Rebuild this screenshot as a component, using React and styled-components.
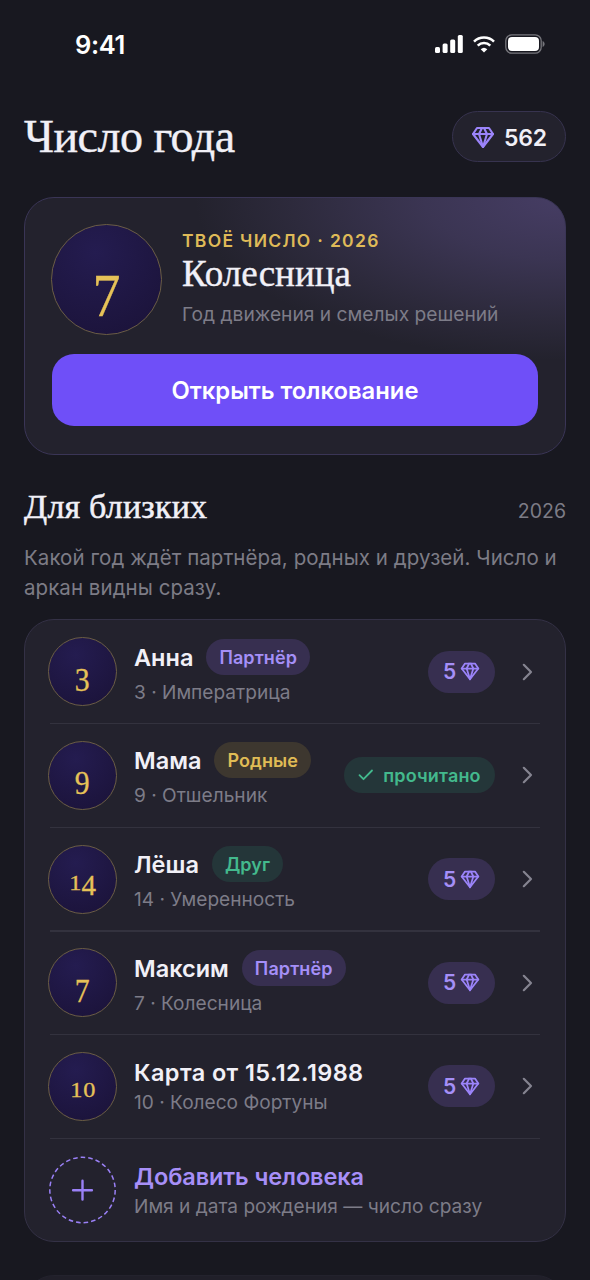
import React from "react";
import styled, { createGlobalStyle, css } from "styled-components";

const GlobalStyle = createGlobalStyle`
  *, *::before, *::after { box-sizing: border-box; }
  html, body { margin: 0; padding: 0; background: #181820; }
  body { height: 1280px; overflow: hidden; }
`;

const sans = `Inter, "Liberation Sans", sans-serif`;
const serif = `"Liberation Serif", serif`;

const tones = {
  violet: { color: "#a58ff8", background: "#372f50" },
  gold: { color: "#e0bc55", background: "#3d372f" },
  green: { color: "#43b98d", background: "#243639" },
};

const Screen = styled.main`
  width: 590px;
  height: 1280px;
  overflow: hidden;
  background: #181820;
  color: #f1f0f7;
  font-family: ${sans};
  display: flex;
  flex-direction: column;
`;

const StatusBar = styled.div`
  height: 88px;
  flex: none;
  padding: 0 45px 0 75px;
  display: flex;
  align-items: center;
  justify-content: space-between;
  color: #fff;
`;

const Clock = styled.span`
  font-size: 25.5px;
  font-weight: 600;
  line-height: 30px;
  letter-spacing: -0.4px;
  padding-top: 2px;
`;

const StatusIcons = styled.div`
  display: flex;
  align-items: center;
  gap: 10px;
`;

const Content = styled.div`
  padding: 23px 24px 0;
  display: flex;
  flex-direction: column;
`;

const Header = styled.header`
  height: 51px;
  display: flex;
  align-items: center;
  justify-content: space-between;
`;

const Title = styled.h1`
  margin: 0;
  font-family: ${serif};
  font-weight: 400;
  font-size: 46px;
  line-height: 51px;
  letter-spacing: -0.5px;
  -webkit-text-stroke: 0.4px currentColor;
`;

const Balance = styled.div`
  width: 114px;
  height: 51px;
  border: 1px solid #37334f;
  border-radius: 26px;
  background: #23222d;
  display: flex;
  align-items: center;
  justify-content: center;
  gap: 9px;
  font-size: 23px;
  font-weight: 600;
  line-height: 28px;
  svg { color: #9b84fa; }
`;

const BalanceValue = styled.span`
  padding-top: 2px;
  letter-spacing: -0.2px;
`;

const Hero = styled.section`
  margin-top: 35px;
  height: 258px;
  padding: 26px 27px 0;
  border: 1px solid #3a3556;
  border-radius: 30px;
  background:
    radial-gradient(ellipse 370px 162px at 100% 0%, #463d64 0%, #3b3553 38%, #2d2a3c 74%, rgba(35, 34, 45, 0) 100%),
    #23222d;
`;

const HeroTop = styled.div`
  display: flex;
  height: 130px;
  margin-left: -1px;
`;

const Medal = styled.div`
  flex: none;
  width: ${(p) => p.$size}px;
  height: ${(p) => p.$size}px;
  border-radius: 50%;
  border: 1px solid #6b5d45;
  background: radial-gradient(circle at 40% 25%, #241c50, #1a1237);
  text-align: center;
  color: #e6c258;
  font-family: ${serif};
  line-height: ${(p) => p.$line}px;
  font-size: ${(p) => p.$font}px;
`;

const digitShapes = {
  short: css`
    font-size: 0.64em;
    transform: scaleX(1.15);
    margin: 0 1px;
  `,
  four: css`
    font-size: 0.88em;
    top: 0.2em;
  `,
  tall: css`
    top: 0.25em;
    transform: scaleX(0.9);
  `,
};

const Digit = styled.span`
  display: inline-block;
  position: relative;
  line-height: 1;
  -webkit-text-stroke: 0.3px currentColor;
  ${(p) => digitShapes[p.$shape]}
`;

const HeroText = styled.div`
  margin-left: 20px;
  display: flex;
  flex-direction: column;
`;

const Eyebrow = styled.div`
  margin-top: 6px;
  font-size: 17.5px;
  font-weight: 600;
  line-height: 22px;
  letter-spacing: 1.3px;
  color: #dfba58;
`;

const HeroName = styled.h2`
  margin: 0;
  font-family: ${serif};
  font-weight: 400;
  font-size: 37px;
  line-height: 44px;
  -webkit-text-stroke: 0.4px currentColor;
`;

const HeroNote = styled.div`
  margin-top: 6px;
  font-size: 19.2px;
  line-height: 24px;
  color: #7d7c88;
  white-space: nowrap;
`;

const PrimaryButton = styled.button`
  display: block;
  width: 100%;
  height: 72px;
  padding: 2px 0 0;
  border: 0;
  border-radius: 22px;
  background: #6f4ff8;
  color: #fff;
  font: 600 23.8px/70px ${sans};
`;

const SectionHead = styled.div`
  margin-top: 30px;
  height: 44px;
  display: flex;
  justify-content: space-between;
  align-items: baseline;
`;

const SectionTitle = styled.h2`
  margin: 0;
  font-family: ${serif};
  font-weight: 400;
  font-size: 34px;
  line-height: 44px;
  letter-spacing: 0.2px;
  -webkit-text-stroke: 0.5px currentColor;
`;

const Year = styled.span`
  font-size: 19.5px;
  color: #7d7c86;
`;

const Intro = styled.p`
  margin: 14px 0 0;
  font-size: 20.5px;
  line-height: 30px;
  letter-spacing: 0.05px;
  color: #7d7c86;
  white-space: nowrap;
`;

const List = styled.section`
  margin-top: 16px;
  height: 623px;
  padding: 0 23px;
  border: 1px solid #343146;
  border-radius: 30px;
  background: #23222d;
`;

const Row = styled.div`
  height: 103.66px;
  display: flex;
  align-items: center;
`;

const Divider = styled.div`
  height: 1.5px;
  margin: -0.75px 2px;
  background: #33323e;
`;

const RowText = styled.div`
  margin-left: 17px;
  flex: 1;
  display: flex;
  flex-direction: column;
`;

const NameLine = styled.div`
  height: ${(p) => (p.$tight ? 30 : 36)}px;
  display: flex;
  align-items: center;
  gap: 13px;
`;

const Name = styled.span`
  font-size: 23.5px;
  font-weight: 600;
  line-height: 30px;
  padding-top: ${(p) => (p.$tagged ? 2 : 0)}px;
  letter-spacing: ${(p) => p.$tracking || 0}px;
  white-space: nowrap;
  color: ${(p) => (p.$accent ? "#a78ff8" : "#f1f0f7")};
`;

const Note = styled.span`
  margin-top: ${(p) => (p.$tight ? 1 : 4)}px;
  font-size: 19.1px;
  line-height: 26px;
  color: #7d7c88;
  white-space: nowrap;
`;

const Tag = styled.span`
  height: 36px;
  padding: 0 13px;
  border-radius: 18px;
  font-size: 18px;
  font-weight: 600;
  line-height: 37px;
  letter-spacing: 0.1px;
  color: ${(p) => tones[p.$tone].color};
  background: ${(p) => tones[p.$tone].background};
`;

const Price = styled.span`
  width: 67px;
  height: 42px;
  border-radius: 21px;
  display: flex;
  align-items: center;
  justify-content: center;
  gap: 4px;
  font-size: 21px;
  font-weight: 600;
  color: ${tones.violet.color};
  background: ${tones.violet.background};
  svg { color: #9b84fa; margin-top: -1px; }
`;

const ReadMark = styled.span`
  width: 151px;
  height: 36px;
  border-radius: 18px;
  display: flex;
  align-items: center;
  justify-content: center;
  gap: 9px;
  font-size: 18px;
  font-weight: 600;
  letter-spacing: 0.15px;
  color: ${tones.green.color};
  background: ${tones.green.background};
`;

const ChevronBox = styled.span`
  margin: 0 9px 0 27px;
  display: flex;
`;

const NextCard = styled.section`
  margin-top: 33px;
  height: 120px;
  flex: none;
  border: 1px solid #23222d;
  border-radius: 30px;
  background: #201f29;
`;

const Gem = ({ size }) => (
  <svg width={size} height={size} viewBox="0 0 24 24" fill="none" stroke="currentColor" strokeWidth="2.1" strokeLinejoin="round" strokeLinecap="round">
    <path d="M6 3h12l4 6-10 13L2 9Z" />
    <path d="M11 3 8 9l4 13 4-13-3-6" />
    <path d="M2 9h20" />
  </svg>
);

const Chevron = () => (
  <svg width="11" height="18" viewBox="0 0 11 18" fill="none" stroke="#858490" strokeWidth="2.2" strokeLinecap="round" strokeLinejoin="round">
    <path d="M1.8 1.8 9 9l-7.2 7.2" />
  </svg>
);

const Check = () => (
  <svg width="16" height="12" viewBox="0 0 16 12" fill="none" stroke="currentColor" strokeWidth="1.8" strokeLinecap="round" strokeLinejoin="round">
    <path d="M1.5 6.2 5.5 10.2 14 1.5" />
  </svg>
);

const Signal = () => (
  <svg width="28" height="18" viewBox="0 0 28 18" fill="#fff">
    <rect x="0" y="12" width="5" height="6" rx="1.5" />
    <rect x="7.6" y="8.5" width="5" height="9.5" rx="1.5" />
    <rect x="15.2" y="4.5" width="5" height="13.5" rx="1.5" />
    <rect x="22.8" y="0" width="5" height="18" rx="1.5" />
  </svg>
);

const Wifi = () => (
  <svg width="22" height="17" viewBox="0 0 22 17" fill="none" stroke="#fff" strokeWidth="2.5">
    <path d="M1 5.7a14.2 14.2 0 0 1 20 0" />
    <path d="M4.7 9.6a8.9 8.9 0 0 1 12.6 0" />
    <path d="M11 16.6 7.7 13.2a4.8 4.8 0 0 1 6.6 0Z" fill="#fff" stroke="none" />
  </svg>
);

const Battery = () => (
  <svg width="40" height="20" viewBox="0 0 40 20">
    <rect x="0.8" y="0.8" width="35.4" height="18.4" rx="6" fill="none" stroke="#77777d" strokeWidth="1.3" />
    <rect x="3" y="3" width="31" height="14" rx="4" fill="#fff" />
    <path d="M37.6 7v6c1.2-.5 2-1.6 2-3s-.8-2.5-2-3Z" fill="#77777d" />
  </svg>
);

const AddMark = () => (
  <svg width="69" height="69" viewBox="0 0 69 69" fill="none" stroke="#9a80f6">
    <circle cx="34.5" cy="34" r="32.7" strokeWidth="1.5" strokeDasharray="4.6 3" />
    <path d="M34.5 24.800v18.800M25.100 34.200h18.800" strokeWidth="2.4" strokeLinecap="round" />
  </svg>
);

const shapeOf = (d) => ("012".includes(d) ? "short" : d === "4" ? "four" : "tall");

const Numeral = ({ value }) =>
  String(value)
    .split("")
    .map((d, i) => (
      <Digit key={i} $shape={shapeOf(d)}>
        {d}
      </Digit>
    ));

const people = [
  { name: "Анна", tag: "Партнёр", tone: "violet", number: 3, arcana: "Императрица" },
  { name: "Мама", tag: "Родные", tone: "gold", number: 9, arcana: "Отшельник", read: true },
  { name: "Лёша", tag: "Друг", tone: "green", number: 14, arcana: "Умеренность" },
  { name: "Максим", tag: "Партнёр", tone: "violet", number: 7, arcana: "Колесница" },
  { name: "Карта от 15.12.1988", tracking: 0.4, number: 10, arcana: "Колесо Фортуны" },
];

const PersonRow = ({ person }) => (
  <Row>
    <Medal $size={69} $font={33} $line={66}>
      <Numeral value={person.number} />
    </Medal>
    <RowText>
      <NameLine $tight={!person.tag}>
        <Name $tagged={!!person.tag} $tracking={person.tracking}>
          {person.name}
        </Name>
        {person.tag && <Tag $tone={person.tone}>{person.tag}</Tag>}
      </NameLine>
      <Note $tight={!person.tag}>{`${person.number} · ${person.arcana}`}</Note>
    </RowText>
    {person.read ? (
      <ReadMark>
        <Check />
        прочитано
      </ReadMark>
    ) : (
      <Price>
        5<Gem size={20} />
      </Price>
    )}
    <ChevronBox>
      <Chevron />
    </ChevronBox>
  </Row>
);

export default function App() {
  return (
    <>
      <GlobalStyle />
      <Screen>
        <StatusBar>
          <Clock>9:41</Clock>
          <StatusIcons>
            <Signal />
            <Wifi />
            <Battery />
          </StatusIcons>
        </StatusBar>
        <Content>
          <Header>
            <Title>Число года</Title>
            <Balance>
              <Gem size={24} />
              <BalanceValue>562</BalanceValue>
            </Balance>
          </Header>
          <Hero>
            <HeroTop>
              <Medal $size={111} $font={62} $line={109}>
                <Numeral value={7} />
              </Medal>
              <HeroText>
                <Eyebrow>ТВОЁ ЧИСЛО · 2026</Eyebrow>
                <HeroName>Колесница</HeroName>
                <HeroNote>Год движения и смелых решений</HeroNote>
              </HeroText>
            </HeroTop>
            <PrimaryButton>Открыть толкование</PrimaryButton>
          </Hero>
          <SectionHead>
            <SectionTitle>Для близких</SectionTitle>
            <Year>2026</Year>
          </SectionHead>
          <Intro>
            Какой год ждёт партнёра, родных и друзей. Число и
            <br />
            аркан видны сразу.
          </Intro>
          <List>
            {people.map((person) => (
              <React.Fragment key={person.name}>
                <PersonRow person={person} />
                <Divider />
              </React.Fragment>
            ))}
            <Row>
              <AddMark />
              <RowText>
                <NameLine $tight>
                  <Name $accent $tracking={-0.1}>
                    Добавить человека
                  </Name>
                </NameLine>
                <Note $tight>Имя и дата рождения — число сразу</Note>
              </RowText>
            </Row>
          </List>
          <NextCard />
        </Content>
      </Screen>
    </>
  );
}
